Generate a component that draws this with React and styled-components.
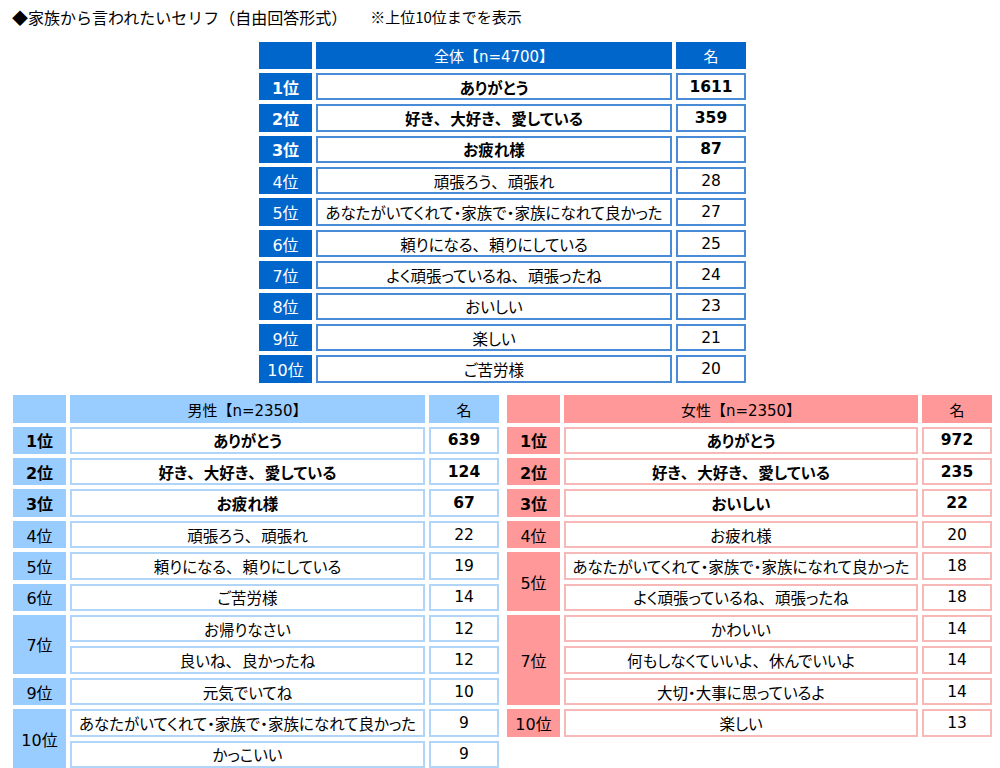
import React from "react";
import styled, { createGlobalStyle } from "styled-components";

const GlobalStyle = createGlobalStyle`
  html, body {
    margin: 0;
    padding: 0;
    overflow: hidden;
    background: #fff;
  }
  body {
    font-family: "DejaVu Sans", "Noto Sans CJK JP", sans-serif;
    color: #000;
  }
`;

const tones = {
  all: { fill: "#0066cc", text: "#ffffff", line: "#4a8bd7" },
  male: { fill: "#99ccff", text: "#000000", line: "#b0d5f8" },
  female: { fill: "#ff9999", text: "#000000", line: "#f7b8b8" },
};

const Page = styled.div`
  width: 1000px;
  height: 768px;
  display: flex;
  flex-direction: column;
`;

const Title = styled.div`
  height: 34px;
  padding-left: 12px;
  display: flex;
  align-items: center;
  font-family: "Noto Sans CJK JP", sans-serif;
  font-size: 16px;
`;

const Note = styled.span`
  margin-left: 23px;
  font-size: 15px;
`;

const TopRow = styled.div`
  display: flex;
  padding-left: 259px;
  padding-top: 8px;
`;

const BottomRow = styled.div`
  display: flex;
  gap: 8px;
  padding-left: 13px;
  padding-top: 12.5px;
`;

const Table = styled.div`
  display: grid;
  grid-template-columns: 53px ${(p) => p.$mid}px 70px;
  grid-auto-rows: 27.4px;
  gap: 4px;
  font-family: "DejaVu Sans", "Noto Sans CJK JP", sans-serif;
`;

const Cell = styled.div`
  display: flex;
  align-items: center;
  justify-content: center;
  box-sizing: border-box;
  white-space: nowrap;
  font-size: 15px;
`;

const HeadCell = styled(Cell)`
  background: ${(p) => tones[p.$tone].fill};
  color: ${(p) => tones[p.$tone].text};
  grid-column: ${(p) => p.$col};
  font-weight: normal;
`;

const RankCell = styled(Cell)`
  grid-column: 1;
  grid-row: span ${(p) => p.$span};
  background: ${(p) => tones[p.$tone].fill};
  color: ${(p) => tones[p.$tone].text};
  font-weight: ${(p) => (p.$bold ? "bold" : "normal")};
  font-size: 16px;
`;

const DataCell = styled(Cell)`
  grid-column: ${(p) => p.$col};
  background: #fff;
  border: 2px solid ${(p) => tones[p.$tone].line};
  font-weight: ${(p) => (p.$bold ? "bold" : "normal")};
  font-size: 15.5px;
  font-feature-settings: "palt";
`;

const Punct = styled.span`
  font-feature-settings: normal;
  margin-right: 1px;
`;

const Phrase = ({ text }) =>
  text.split(/(、)/).map((part, i) =>
    part === "、" ? <Punct key={i}>、</Punct> : <span key={i}>{part}</span>
  );

const allData = [
  { rank: "1位", items: [["ありがとう", 1611]] },
  { rank: "2位", items: [["好き、大好き、愛している", 359]] },
  { rank: "3位", items: [["お疲れ様", 87]] },
  { rank: "4位", items: [["頑張ろう、頑張れ", 28]] },
  { rank: "5位", items: [["あなたがいてくれて・家族で・家族になれて良かった", 27]] },
  { rank: "6位", items: [["頼りになる、頼りにしている", 25]] },
  { rank: "7位", items: [["よく頑張っているね、頑張ったね", 24]] },
  { rank: "8位", items: [["おいしい", 23]] },
  { rank: "9位", items: [["楽しい", 21]] },
  { rank: "10位", items: [["ご苦労様", 20]] },
];

const maleData = [
  { rank: "1位", items: [["ありがとう", 639]] },
  { rank: "2位", items: [["好き、大好き、愛している", 124]] },
  { rank: "3位", items: [["お疲れ様", 67]] },
  { rank: "4位", items: [["頑張ろう、頑張れ", 22]] },
  { rank: "5位", items: [["頼りになる、頼りにしている", 19]] },
  { rank: "6位", items: [["ご苦労様", 14]] },
  { rank: "7位", items: [["お帰りなさい", 12], ["良いね、良かったね", 12]] },
  { rank: "9位", items: [["元気でいてね", 10]] },
  {
    rank: "10位",
    items: [
      ["あなたがいてくれて・家族で・家族になれて良かった", 9],
      ["かっこいい", 9],
    ],
  },
];

const femaleData = [
  { rank: "1位", items: [["ありがとう", 972]] },
  { rank: "2位", items: [["好き、大好き、愛している", 235]] },
  { rank: "3位", items: [["おいしい", 22]] },
  { rank: "4位", items: [["お疲れ様", 20]] },
  {
    rank: "5位",
    items: [
      ["あなたがいてくれて・家族で・家族になれて良かった", 18],
      ["よく頑張っているね、頑張ったね", 18],
    ],
  },
  {
    rank: "7位",
    items: [
      ["かわいい", 14],
      ["何もしなくていいよ、休んでいいよ", 14],
      ["大切・大事に思っているよ", 14],
    ],
  },
  { rank: "10位", items: [["楽しい", 13]] },
];

const RankTable = ({ tone, label, data, mid }) => (
  <Table $mid={mid}>
    <HeadCell $tone={tone} $col={1} />
    <HeadCell $tone={tone} $col={2}>
      {label}
    </HeadCell>
    <HeadCell $tone={tone} $col={3}>
      名
    </HeadCell>
    {data.map((g, gi) => {
      const bold = gi < 3;
      return (
        <React.Fragment key={g.rank}>
          <RankCell $tone={tone} $span={g.items.length} $bold={bold}>
            {g.rank}
          </RankCell>
          {g.items.map(([text, n]) => (
            <React.Fragment key={text}>
              <DataCell $tone={tone} $col={2} $bold={bold}>
                <Phrase text={text} />
              </DataCell>
              <DataCell $tone={tone} $col={3} $bold={bold}>
                {n}
              </DataCell>
            </React.Fragment>
          ))}
        </React.Fragment>
      );
    })}
  </Table>
);

export default function App() {
  return (
    <>
      <GlobalStyle />
      <Page>
        <Title>
          ◆家族から言われたいセリフ（自由回答形式）
          <Note>※上位10位までを表示</Note>
        </Title>
        <TopRow>
          <RankTable tone="all" label="全体【n=4700】" data={allData} mid={356} />
        </TopRow>
        <BottomRow>
          <RankTable tone="male" label="男性【n=2350】" data={maleData} mid={355} />
          <RankTable tone="female" label="女性【n=2350】" data={femaleData} mid={354} />
        </BottomRow>
      </Page>
    </>
  );
}
